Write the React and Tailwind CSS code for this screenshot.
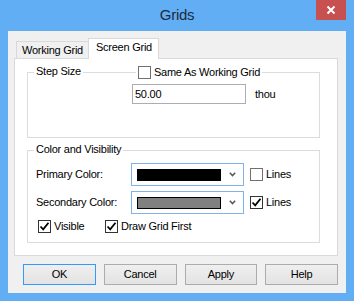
import React from 'react';

const font = { fontFamily: '"Liberation Sans", Arial, sans-serif' };

function Check({ checked }) {
  return (
    <div
      className={`w-[13px] h-[13px] shrink-0 bg-white border flex items-center justify-center ${
        checked ? 'border-[#333333]' : 'border-[#707070]'
      }`}
    >
      {checked && (
        <svg width="11" height="11" viewBox="0 0 11 11">
          <path d="M1.5 5.5 L4.2 8.3 L9.5 1.8" fill="none" stroke="#000" strokeWidth="1.8" />
        </svg>
      )}
    </div>
  );
}

function Combo({ color }) {
  return (
    <div className="w-[113px] h-[23px] border border-[#7eb4ea] bg-white flex items-center pl-[5px] pr-[7px]">
      <div className={`w-[84px] h-[12px] border border-black ${color}`}></div>
      <svg className="ml-auto" width="7" height="5" viewBox="0 0 7 5">
        <path d="M0.8 0.8 L3.5 3.6 L6.2 0.8" fill="none" stroke="#5a5a5a" strokeWidth="1.6" />
      </svg>
    </div>
  );
}

function Btn({ children, primary }) {
  return (
    <div
      className={`w-[73px] h-[21px] flex items-center justify-center bg-gradient-to-b from-[#efefef] to-[#e3e3e3] border ${
        primary ? 'border-[#3399ff]' : 'border-[#acacac]'
      }`}
    >
      {children}
    </div>
  );
}

export default function App() {
  return (
    <div
      className="w-[354px] h-[301px] bg-[#62aef5] text-[11px] leading-[13px] tracking-[-0.25px] text-black overflow-hidden"
      style={font}
    >
      {/* Title bar */}
      <div className="relative h-[31px] flex items-center justify-center">
        <span className="text-[15px] leading-[18px] tracking-[-0.3px] text-[#1e2a3a] mt-[-1px]">Grids</span>
        <div className="absolute top-0 right-[8px] w-[30px] h-[20px] bg-[#c75050] flex items-center justify-center">
          <svg width="10" height="10" viewBox="0 0 10 10">
            <path d="M1.5 1.5 L8.5 8.5 M8.5 1.5 L1.5 8.5" stroke="#fff" strokeWidth="2" />
          </svg>
        </div>
      </div>

      {/* Client area */}
      <div className="mx-[8px] h-[262px] bg-[#f0f0f0] pt-[7px] pl-[6px] pr-[8px]">
        {/* Tabs */}
        <div className="flex items-end h-[20px] pl-[2px]">
          <div className="w-[72px] h-[17px] border-l border-t border-[#d9d9d9] bg-[#f0f0f0] flex items-center pl-[5px]">
            Working Grid
          </div>
          <div className="relative z-10 w-[71px] h-[21px] mb-[-1px] border-l border-t border-r border-[#d9d9d9] bg-white pl-[7px] pt-[2px]">
            Screen Grid
          </div>
        </div>

        {/* Tab panel */}
        <div className="h-[198px] border border-[#d9d9d9] bg-white pt-[13px] pl-[12px] pr-[17px]">
          {/* Step Size */}
          <div className="relative h-[66px] border border-[#dcdcdc] pl-[104px] pt-[11px]">
            <span className="absolute top-[-8px] left-[6px] px-[2px] bg-white">Step Size</span>
            <div className="absolute top-[-7px] left-[108px] px-[2px] h-[13px] bg-white flex items-center gap-[3px]">
              <Check />
              <span>Same As Working Grid</span>
            </div>
            <div className="flex items-center">
              <div className="w-[114px] h-[20px] border border-[#abadb3] bg-white flex items-center pl-[2px]">
                50.00
              </div>
              <span className="ml-[9px]">thou</span>
            </div>
          </div>

          {/* Color and Visibility */}
          <div className="relative h-[93px] mt-[12px] border border-[#dcdcdc] pl-[8px] pt-[12px]">
            <span className="absolute top-[-8px] left-[6px] px-[2px] bg-white">Color and Visibility</span>
            <div className="flex items-center">
              <span className="w-[95px]">Primary Color:</span>
              <Combo color="bg-black" />
              <div className="flex items-center gap-[3px] ml-[6px]">
                <Check />
                <span>Lines</span>
              </div>
            </div>
            <div className="flex items-center mt-[5px]">
              <span className="w-[95px]">Secondary Color:</span>
              <Combo color="bg-[#808080]" />
              <div className="flex items-center gap-[3px] ml-[6px]">
                <Check checked />
                <span>Lines</span>
              </div>
            </div>
            <div className="flex items-center mt-[6px] pl-[2px]">
              <div className="flex items-center gap-[3px] w-[67px]">
                <Check checked />
                <span>Visible</span>
              </div>
              <div className="flex items-center gap-[3px]">
                <Check checked />
                <span>Draw Grid First</span>
              </div>
            </div>
          </div>
        </div>

        {/* Buttons */}
        <div className="flex gap-[8px] mt-[8px] pl-[9px]">
          <Btn primary>OK</Btn>
          <Btn>Cancel</Btn>
          <Btn>Apply</Btn>
          <Btn>Help</Btn>
        </div>
      </div>
    </div>
  );
}
